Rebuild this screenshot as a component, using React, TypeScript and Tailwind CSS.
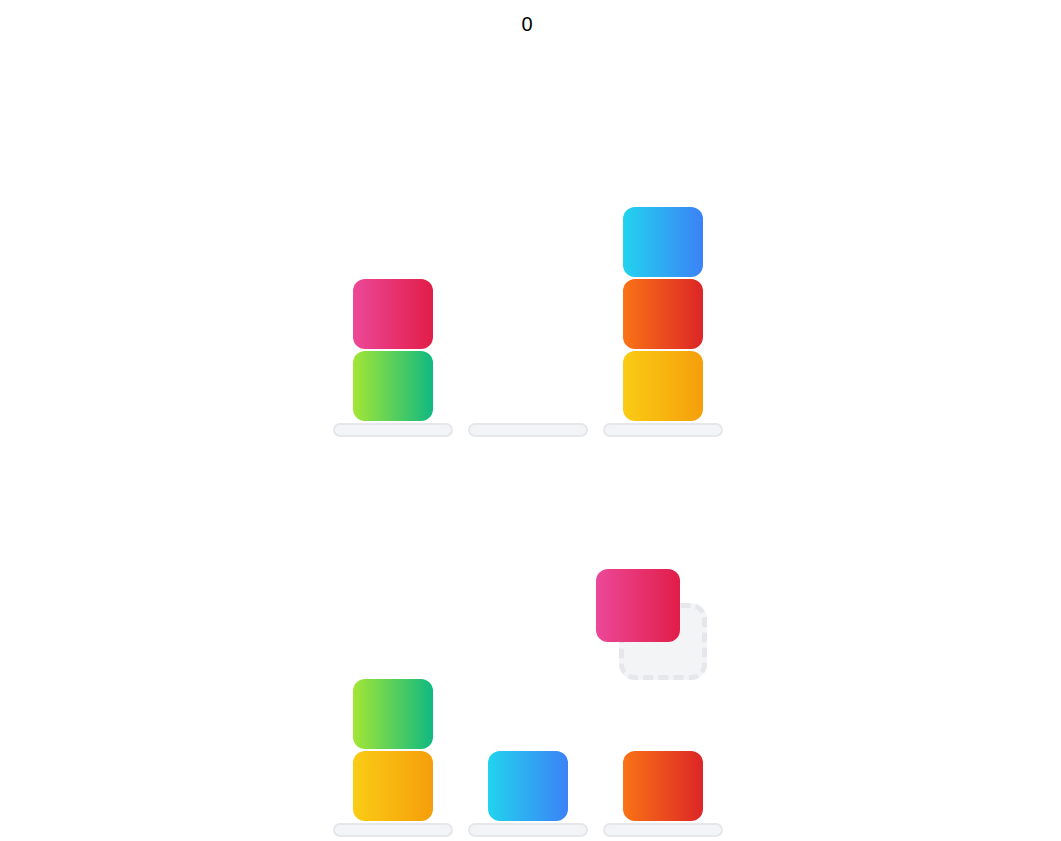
import React from 'react'

type Color = 'pink' | 'lime' | 'cyan' | 'orange' | 'yellow'

const gradients: Record<Color, string> = {
  pink: 'bg-[linear-gradient(to_right,#ec4899,#e11d48)]',
  lime: 'bg-[linear-gradient(to_right,#a3e635,#10b981)]',
  cyan: 'bg-[linear-gradient(to_right,#22d3ee,#3b82f6)]',
  orange: 'bg-[linear-gradient(to_right,#f97316,#dc2626)]',
  yellow: 'bg-[linear-gradient(to_right,#facc15,#f59e0b)]',
}

const Block = ({ color }: { color: Color }) => (
  <div className={`w-[80px] h-[70px] rounded-xl ${gradients[color]}`} />
)

// stacks are listed top to bottom
const Column = ({ stack }: { stack: Color[] }) => (
  <div className="w-[120px] flex flex-col items-center gap-[2px]">
    {stack.map((c, i) => (
      <Block key={i} color={c} />
    ))}
    <div className="w-[120px] h-[14px] rounded-full bg-[#f3f4f6] border-2 border-[#e5e7eb]" />
  </div>
)

const Board = ({ columns, children }: { columns: Color[][]; children?: React.ReactNode }) => (
  <div className="h-[400px] flex justify-center items-end pr-[5px]">
    <div className="relative h-full flex items-end gap-[15px]">
      {columns.map((s, i) => (
        <Column key={i} stack={s} />
      ))}
      {children}
    </div>
  </div>
)

export default function App() {
  return (
    <div className="w-full bg-white" style={{ fontFamily: '"Liberation Sans", Arial, sans-serif' }}>
      <div className="h-[37px] pt-[10px] pr-[7px] text-center text-xl leading-7 text-black">0</div>
      <Board columns={[['pink', 'lime'], [], ['cyan', 'orange', 'yellow']]} />
      <Board columns={[['lime', 'yellow'], ['cyan'], ['orange']]}>
        <div className="absolute left-[286px] top-[166px] w-[88px] h-[77px] rounded-2xl border-[5px] border-dashed border-[#e5e7eb] bg-[#f3f4f6]" />
        <div className="absolute left-[263px] top-[132px] w-[84px] h-[73px] rounded-xl bg-[linear-gradient(to_right,#ec4899,#e11d48)]" />
      </Board>
    </div>
  )
}
